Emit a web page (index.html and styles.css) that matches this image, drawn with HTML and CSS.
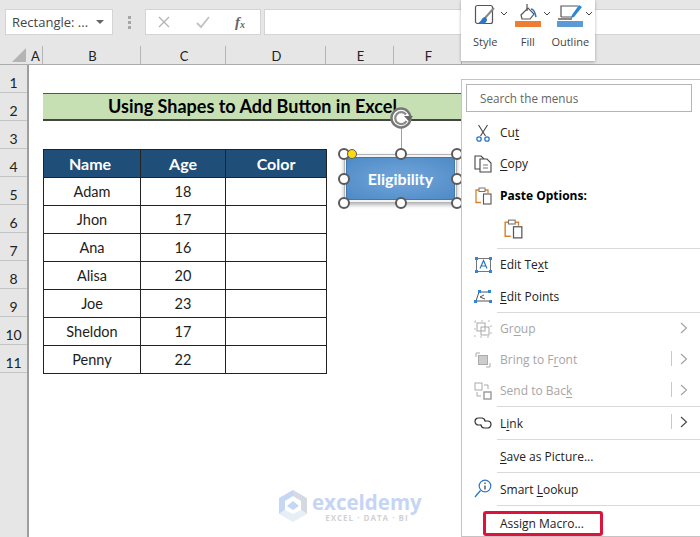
FILE: index.html
```html
<!DOCTYPE html>
<html lang="en">
<head>
    <meta charset="UTF-8">
    <meta name="viewport" content="width=device-width, initial-scale=1.0">
    <title>Using Shapes to Add Button in Excel</title>
    <link rel="stylesheet" href="styles.css">
</head>
<body>
<div class="app">

    <!-- Formula bar -->
    <div class="formula-row">
        <div class="name-box"><span>Rectangle: ...</span><i class="caret"></i></div>
        <div class="grip"><b></b><b></b><b></b></div>
        <div class="fx-box">
            <svg width="14" height="14" viewBox="0 0 14 14"><path d="M2 2l10 10M12 2L2 12" stroke="#b5b5b5" stroke-width="1.4" fill="none"/></svg>
            <svg width="16" height="14" viewBox="0 0 16 14"><path d="M2 8l4 4 8-10" stroke="#c4c4c4" stroke-width="2" fill="none"/></svg>
            <span class="fx">f<sub>x</sub></span>
        </div>
        <div class="formula-input"></div>
    </div>

    <!-- Column headers -->
    <div class="col-heads">
        <div class="corner"><i></i></div>
        <div class="col col-a">A</div>
        <div class="col col-b">B</div>
        <div class="col col-c">C</div>
        <div class="col col-d">D</div>
        <div class="col col-e">E</div>
        <div class="col col-f">F</div>
        <div class="col col-rest"></div>
    </div>

    <div class="sheet">
        <div class="row-heads">
            <div class="row-num">1</div>
            <div class="row-num">2</div>
            <div class="row-num">3</div>
            <div class="row-num">4</div>
            <div class="row-num">5</div>
            <div class="row-num">6</div>
            <div class="row-num">7</div>
            <div class="row-num">8</div>
            <div class="row-num">9</div>
            <div class="row-num">10</div>
            <div class="row-num">11</div>
        </div>
        <div class="cells">
            <div class="title-cell">Using Shapes to Add Button in Excel</div>
            <table class="data">
                <tr><th class="w-name">Name</th><th class="w-age">Age</th><th class="w-color">Color</th></tr>
                <tr><td>Adam</td><td>18</td><td></td></tr>
                <tr><td>Jhon</td><td>17</td><td></td></tr>
                <tr><td>Ana</td><td>16</td><td></td></tr>
                <tr><td>Alisa</td><td>20</td><td></td></tr>
                <tr><td>Joe</td><td>23</td><td></td></tr>
                <tr><td>Sheldon</td><td>17</td><td></td></tr>
                <tr><td>Penny</td><td>22</td><td></td></tr>
            </table>
        </div>
    </div>

    <!-- Watermark -->
    <div class="watermark">
        <svg width="28" height="32" viewBox="0 0 28 32">
            <path d="M14 0L0 8v16l6-4V11l8-5z" fill="#c6d6f5"/>
            <path d="M14 0l14 8v16l-6-4V11l-8-5z" fill="#d5dae2"/>
            <path d="M0 24l14 8 14-8-6-4-8 4-8-4z" fill="#e6eef6"/>
            <path d="M14 11l6 5-6 4-6-4z" fill="#c6d6f5"/>
        </svg>
        <div class="wm-text">
            <div class="wm-name">exceldemy</div>
            <div class="wm-sub">EXCEL · DATA · BI</div>
        </div>
    </div>

    <!-- Selected shape -->
    <div class="rotate-line"></div>
    <div class="shape">
        <div class="shape-body">Eligibility</div>
        <i class="handle h-tl"></i>
        <i class="handle h-tc"></i>
        <i class="handle h-tr"></i>
        <i class="handle h-ml"></i>
        <i class="handle h-mr"></i>
        <i class="handle h-bl"></i>
        <i class="handle h-bc"></i>
        <i class="handle h-br"></i>
        <i class="handle h-adj"></i>
    </div>
    <div class="rotate-handle">
        <svg width="30" height="24" viewBox="0 0 30 24">
            <circle cx="12" cy="12" r="9.5" fill="#fff" stroke="#777" stroke-width="2.4"/>
            <path d="M17.5 15a6 6 0 1 1-.5-6.500" fill="none" stroke="#8a8a8a" stroke-width="2.200"/>
            <path d="M15 10h9l-4.500 5z" fill="#666"/>
        </svg>
    </div>

    <!-- Mini toolbar -->
    <div class="mini-bar">
        <div class="mini-item">
            <div class="mini-icon">
                <svg width="26" height="27" viewBox="0 0 26 27">
                    <rect x="3.500" y="5.500" width="17" height="18" rx="2" fill="#fff" stroke="#555" stroke-width="1.200"/>
                    <path d="M22 8L13 18" stroke="#888" stroke-width="2"/>
                    <path d="M13 17c-3 0-3 4-7 6 4 2 9 1 9-4z" fill="#2e75c6"/>
                </svg>
            </div>
            <svg class="chev" width="8" height="5" viewBox="0 0 8 5"><path d="M1 1l3 3 3-3" fill="none" stroke="#444"/></svg>
            <span>Style</span>
        </div>
        <div class="mini-item">
            <div class="mini-icon">
                <svg width="26" height="27" viewBox="0 0 26 27">
                    <path d="M6 15l7-7 6 6-4 5H7z" fill="#fff" stroke="#555" stroke-width="1.200"/>
                    <path d="M12 4v7" stroke="#555" stroke-width="1.200"/>
                    <path d="M21 17c-1-5-3-8-5-8" fill="none" stroke="#2e75c6" stroke-width="1.600"/>
                    <rect x="0" y="21" width="26" height="6" fill="#ed7d31"/>
                </svg>
            </div>
            <svg class="chev" width="8" height="5" viewBox="0 0 8 5"><path d="M1 1l3 3 3-3" fill="none" stroke="#444"/></svg>
            <span>Fill</span>
        </div>
        <div class="mini-item">
            <div class="mini-icon">
                <svg width="26" height="27" viewBox="0 0 26 27">
                    <path d="M4 17V6h17M4 17h11" fill="none" stroke="#555" stroke-width="1.200"/>
                    <path d="M1 19h14" stroke="#555" stroke-width="1.400"/>
                    <path d="M22 5l3 2-8 10-3 1 1-3z" fill="#2e86d6"/>
                    <rect x="0" y="21" width="26" height="6" fill="#5b9bd5"/>
                </svg>
            </div>
            <svg class="chev" width="8" height="5" viewBox="0 0 8 5"><path d="M1 1l3 3 3-3" fill="none" stroke="#444"/></svg>
            <span>Outline</span>
        </div>
    </div>

    <!-- Context menu -->
    <div class="menu">
        <div class="menu-search">Search the menus</div>

        <div class="menu-item">
            <span class="menu-icon">
                <svg width="14" height="18" viewBox="0 0 14 18"><path d="M2.500 1l7 11M11.500 1l-7 11" stroke="#444" stroke-width="1.100" fill="none"/><circle cx="3" cy="15" r="2.200" fill="none" stroke="#2e75c6" stroke-width="1.300"/><circle cx="11" cy="15" r="2.200" fill="none" stroke="#2e75c6" stroke-width="1.300"/></svg>
            </span>
            <span>Cu<u>t</u></span>
        </div>
        <div class="menu-item">
            <span class="menu-icon">
                <svg width="18" height="18" viewBox="0 0 18 18"><path d="M6 14H1V1h6l3 3" fill="none" stroke="#444" stroke-width="1.100"/><path d="M6 4h7l4 4v9H6z" fill="#fff" stroke="#444" stroke-width="1.100"/><path d="M9 10h5M9 13h5" stroke="#777"/></svg>
            </span>
            <span><u>C</u>opy</span>
        </div>
        <div class="menu-item paste-label">
            <span class="menu-icon">
                <svg width="17" height="18" viewBox="0 0 17 18"><use href="#clip"/></svg>
            </span>
            <strong>Paste Options:</strong>
        </div>
        <div class="paste-row">
            <svg width="19" height="20" viewBox="0 0 17 18">
                <g id="clip">
                    <path d="M6 15.500H1V3h3M10 3h3v3" fill="none" stroke="#d9822b" stroke-width="1.300"/>
                    <rect x="4" y="1" width="6" height="3.500" fill="#fff" stroke="#777"/>
                    <rect x="8.500" y="7" width="7.500" height="10" fill="#fff" stroke="#555" stroke-width="1.100"/>
                </g>
            </svg>
        </div>
        <div class="menu-sep"></div>

        <div class="menu-item half">
            <span class="menu-icon">
                <svg width="17" height="16" viewBox="0 0 17 16"><rect x="1.500" y="1.500" width="14" height="13" fill="none" stroke="#777"/><path d="M5 11.500l3.500-8 3.500 8M6.200 9h4.600" fill="none" stroke="#2e75c6" stroke-width="1.200"/><path d="M0 0h3v3H0zM14 0h3v3h-3zM0 13h3v3H0zM14 13h3v3h-3z" fill="#2e86d6"/></svg>
            </span>
            <span>Edit Te<u>x</u>t</span>
        </div>
        <div class="menu-item half">
            <span class="menu-icon">
                <svg width="18" height="15" viewBox="0 0 18 15"><path d="M2 12L5 3h9M10 6l-4 2 5 2M3 12h12" fill="none" stroke="#555"/><path d="M4 1h3v3H4zM14 1h3v3h-3zM0 11h3v3H0zM15 11h3v3h-3z" fill="#2e86d6"/></svg>
            </span>
            <span><u>E</u>dit Points</span>
        </div>
        <div class="menu-sep"></div>

        <div class="menu-item off">
            <span class="menu-icon">
                <svg width="18" height="18" viewBox="0 0 18 18"><rect x="3" y="3" width="8" height="8" fill="none" stroke="#aaa"/><rect x="7" y="7" width="8" height="8" fill="none" stroke="#aaa"/><path d="M1 1v16h16V1z" fill="none" stroke="#bbb" stroke-dasharray="2 5"/></svg>
            </span>
            <span>Gr<u>o</u>up</span>
            <span class="menu-arrow"><svg width="8" height="12" viewBox="0 0 8 12"><path d="M1 1l5.500 5L1 11" fill="none" stroke="#a0a0a0" stroke-width="1.100"/></svg></span>
        </div>
        <div class="menu-item off">
            <span class="menu-icon">
                <svg width="16" height="16" viewBox="0 0 16 16"><path d="M1 5V1h4M11 15h4v-4" fill="none" stroke="#aaa"/><rect x="3.500" y="3.500" width="9" height="9" fill="#ccc" stroke="#aaa"/></svg>
            </span>
            <span>Bring to F<u>r</u>ont</span>
            <span class="menu-arrow split"><svg width="8" height="12" viewBox="0 0 8 12"><path d="M1 1l5.500 5L1 11" fill="none" stroke="#a0a0a0" stroke-width="1.100"/></svg></span>
        </div>
        <div class="menu-item off">
            <span class="menu-icon">
                <svg width="18" height="18" viewBox="0 0 18 18"><rect x="1" y="1" width="7" height="7" fill="none" stroke="#aaa"/><rect x="10" y="10" width="7" height="7" fill="none" stroke="#999" stroke-width="1.400"/><path d="M10 3h4v4M3 10v4h4" fill="none" stroke="#aaa"/></svg>
            </span>
            <span>Send to Bac<u>k</u></span>
            <span class="menu-arrow split"><svg width="8" height="12" viewBox="0 0 8 12"><path d="M1 1l5.500 5L1 11" fill="none" stroke="#a0a0a0" stroke-width="1.100"/></svg></span>
        </div>
        <div class="menu-sep"></div>

        <div class="menu-item tall">
            <span class="menu-icon">
                <svg width="18" height="12" viewBox="0 0 18 12"><path d="M7 8H4.500a3.500 3.500 0 0 1 0-7H8a3.500 3.500 0 0 1 3 3.500" fill="none" stroke="#333" stroke-width="1.200"/><path d="M11 4h2.500a3.500 3.500 0 0 1 0 7H10a3.500 3.500 0 0 1-3-3.500" fill="none" stroke="#333" stroke-width="1.200"/></svg>
            </span>
            <span>L<u>i</u>nk</span>
            <span class="menu-arrow split"><svg width="8" height="12" viewBox="0 0 8 12"><path d="M1 1l5.500 5L1 11" fill="none" stroke="#444" stroke-width="1.100"/></svg></span>
        </div>
        <div class="menu-sep"></div>

        <div class="menu-item tall">
            <span class="menu-icon"></span>
            <span><u>S</u>ave as Picture...</span>
        </div>
        <div class="menu-sep"></div>

        <div class="menu-item tall">
            <span class="menu-icon">
                <svg width="18" height="20" viewBox="0 0 18 20"><circle cx="11" cy="7" r="5.800" fill="#fff" stroke="#2e75c6" stroke-width="1.200"/><path d="M6.500 11.500L1 18" stroke="#2e75c6" stroke-width="1.300"/><path d="M11 6.500v4M11 3.500v1.500" stroke="#444" stroke-width="1.300"/></svg>
            </span>
            <span>Smart <u>L</u>ookup</span>
        </div>
        <div class="menu-sep"></div>

        <div class="menu-item assign">
            <span class="menu-icon"></span>
            <span>Assi<u>g</u>n Macro...</span>
            <i class="red-box"></i>
        </div>
    </div>

</div>
</body>
</html>
```

FILE: styles.css
```css
/* General Styling */
body {
    margin: 0;
    padding: 0;
    background-color: #fff;
    font-family: "Open Sans", "Liberation Sans", sans-serif;
    color: #333;
}

.app {
    position: relative;
    width: 700px;
    height: 537px;
    overflow: hidden;
    display: flex;
    flex-direction: column;
}

/* Formula bar */
.formula-row {
    height: 46px;
    box-sizing: border-box;
    padding: 9px 0 11px 5px;
    display: flex;
    background-color: #e6e6e6;
}

.name-box {
    width: 108px;
    box-sizing: border-box;
    background: #fff;
    border: 1px solid #d4d4d4;
    display: flex;
    align-items: center;
    justify-content: space-between;
    padding: 0 8px 0 6px;
    font-size: 13px;
    color: #444;
}

.caret {
    width: 0;
    height: 0;
    border-left: 4px solid transparent;
    border-right: 4px solid transparent;
    border-top: 4px solid #666;
}

.grip {
    width: 32px;
    display: flex;
    flex-direction: column;
    align-items: center;
    justify-content: center;
    gap: 2px;
}

.grip b {
    width: 3px;
    height: 3px;
    background: #a6a6a6;
}

.fx-box {
    width: 116px;
    box-sizing: border-box;
    background: #fff;
    border: 1px solid #d4d4d4;
    display: flex;
    align-items: center;
    gap: 24px;
    padding-left: 11px;
}

.fx {
    font-family: "Liberation Serif", serif;
    font-style: italic;
    font-weight: bold;
    font-size: 15px;
    color: #666;
    line-height: 1;
}

.fx sub {
    font-size: 10px;
    vertical-align: -1px;
}

.formula-input {
    flex: 1;
    margin-left: 3px;
    background: #fff;
    border: 1px solid #d4d4d4;
    border-right: none;
}

/* Column headers */
.col-heads {
    height: 18px;
    display: flex;
    background-color: #e6e6e6;
    border-bottom: 1px solid #ababab;
}

.corner {
    width: 29px;
    position: relative;
    flex: none;
}

.corner i {
    position: absolute;
    right: 3px;
    bottom: 2px;
    width: 0;
    height: 0;
    border-left: 14px solid transparent;
    border-bottom: 14px solid #b4b4b4;
}

.col {
    flex: none;
    box-sizing: border-box;
    border-right: 1px solid #b5b5b5;
    padding-left: 2px;
    font-family: "Lato", sans-serif;
    font-size: 13px;
    color: #222;
    text-align: center;
    line-height: 21px;
}

.col-a { width: 14px; padding-left: 0; }
.col-b { width: 98px; }
.col-c { width: 85px; }
.col-d { width: 100px; }
.col-e { width: 68px; }
.col-f { width: 68px; }
.col-rest { flex: 1; border-right: none; }

/* Sheet */
.sheet {
    flex: 1;
    display: flex;
}

.row-heads {
    width: 29px;
    box-sizing: border-box;
    flex: none;
    background-color: #e6e6e6;
    border-right: 2px solid #9e9e9e;
}

.row-num {
    height: 28px;
    box-sizing: border-box;
    border-bottom: 1px solid #c4c4c4;
    font-family: "Lato", sans-serif;
    font-size: 14px;
    color: #222;
    text-align: center;
    padding-top: 8px;
    line-height: 20px;
}

.cells {
    padding: 28px 0 0 14px;
}

.title-cell {
    width: 419px;
    height: 28px;
    box-sizing: border-box;
    background-color: #c6e0b4;
    border-top: 1px solid #555;
    border-bottom: 2px solid #444;
    font-family: "Lato", sans-serif;
    font-weight: bold;
    font-size: 18px;
    color: #000;
    text-align: center;
    line-height: 25px;
}

.data {
    margin-top: 28px;
    border-collapse: collapse;
    font-family: "Lato", sans-serif;
    table-layout: fixed;
}

.data th,
.data td {
    height: 28px;
    box-sizing: border-box;
    padding: 0;
    border: 1px solid #222;
    text-align: center;
    font-size: 14.5px;
    color: #1d1d1d;
    font-weight: normal;
}

.data th {
    background-color: #1f4e78;
    color: #fff;
    font-weight: bold;
    font-size: 16px;
}

.data .w-name { width: 97px; padding-right: 4px; }
.w-age { width: 85px; }
.w-color { width: 101px; }

/* Watermark */
.watermark {
    position: absolute;
    left: 279px;
    top: 490px;
    display: flex;
    gap: 5px;
}

.wm-name {
    font-family: "Open Sans", sans-serif;
    font-weight: bold;
    font-size: 20.5px;
    line-height: 21px;
    margin-top: 2px;
    color: #c6d5f4;
}

.wm-sub {
    font-size: 8px;
    letter-spacing: 1px;
    line-height: 10px;
    color: #d2d2d2;
    text-align: center;
    font-weight: bold;
}

/* Selected shape */
.rotate-line {
    position: absolute;
    left: 401px;
    top: 128px;
    width: 1px;
    height: 22px;
    background: #a0a0a0;
}

.rotate-handle {
    position: absolute;
    left: 389px;
    top: 106px;
    line-height: 0;
}

.shape {
    position: absolute;
    left: 344px;
    top: 154px;
    width: 113px;
    height: 49px;
    border: 1px solid #b5b5b5;
    box-sizing: border-box;
    box-shadow: 0 2px 4px rgba(0, 0, 0, 0.3);
    background: #f4f4f4;
}

.shape-body {
    margin: 2px 1px;
    height: 43px;
    border-radius: 3px;
    background: radial-gradient(ellipse at center, #6aa0d6 20%, #4f8ac6 100%);
    border: 1px solid #3f77b0;
    box-sizing: border-box;
    display: flex;
    align-items: center;
    justify-content: center;
    font-family: "Lato", sans-serif;
    font-weight: bold;
    font-size: 16px;
    color: #fff;
}

.handle {
    position: absolute;
    width: 12px;
    height: 12px;
    box-sizing: border-box;
    border-radius: 50%;
    background: #fff;
    border: 2px solid #5a5a5a;
}

.h-tl { left: -7px; top: -7px; }
.h-tc { left: 50px; top: -7px; }
.h-tr { left: 106px; top: -7px; }
.h-ml { left: -7px; top: 18px; }
.h-mr { left: 106px; top: 18px; }
.h-bl { left: -7px; top: 42px; }
.h-bc { left: 50px; top: 42px; }
.h-br { left: 106px; top: 42px; }
.h-adj { left: 2px; top: -6px; width: 10px; height: 10px; border-width: 1px; background: #ffd90f; }

/* Mini toolbar */
.mini-bar {
    position: absolute;
    left: 461px;
    top: 0;
    width: 134px;
    height: 61px;
    box-sizing: border-box;
    background: #fff;
    box-shadow: 0 1px 3px rgba(0, 0, 0, 0.3);
    display: flex;
    padding-left: 3px;
    z-index: 3;
}

.mini-item {
    position: relative;
    width: 42.5px;
    display: flex;
    flex-direction: column;
    align-items: center;
    font-size: 11px;
    color: #444;
}

.mini-icon {
    height: 27px;
    margin-bottom: 7px;
}

.chev {
    position: absolute;
    left: 36px;
    top: 11px;
}

/* Context menu */
.menu {
    position: absolute;
    left: 461px;
    top: 79px;
    width: 239px;
    height: 458px;
    box-sizing: border-box;
    background: #fff;
    border: 1px solid #c4c4c4;
    border-right-width: 0;
    padding-top: 4px;
    font-size: 12px;
    color: #222;
    z-index: 3;
}

.menu-search {
    margin: 0 8px 5px 4px;
    height: 28px;
    box-sizing: border-box;
    border: 1px solid #b5b5b5;
    padding-left: 13px;
    line-height: 26px;
    color: #666;
    font-size: 11.7px;
}

.menu-item {
    position: relative;
    height: 31px;
    display: flex;
    align-items: center;
}

.half { height: 31.5px; }
.tall { height: 32px; }
.assign { padding-top: 3px; box-sizing: border-box; height: 31px; }

.menu-icon {
    width: 38px;
    flex: none;
    display: flex;
    justify-content: center;
    padding-left: 4px;
    box-sizing: border-box;
}

.menu-item u {
    text-underline-offset: 2px;
    text-decoration-thickness: 1px;
}

.paste-label {
    height: 33px;
    color: #000;
}

.paste-row {
    height: 33px;
    padding: 0 0 3px 42px;
    display: flex;
    align-items: center;
}

.menu-sep {
    height: 1px;
    margin-left: 35px;
    background: #d9d9d9;
}

.off {
    color: #a6a6a6;
}

.menu-arrow {
    position: absolute;
    right: 12px;
    top: 9px;
    line-height: 0;
}

.menu-arrow.split::before {
    content: "";
    position: absolute;
    left: -9px;
    top: -2px;
    width: 1px;
    height: 15px;
    background: #c8c8c8;
}

.red-box {
    position: absolute;
    left: 21px;
    top: 5px;
    width: 120px;
    height: 25px;
    box-sizing: border-box;
    border: 3px solid #dc143c;
    border-radius: 3px;
}
```
